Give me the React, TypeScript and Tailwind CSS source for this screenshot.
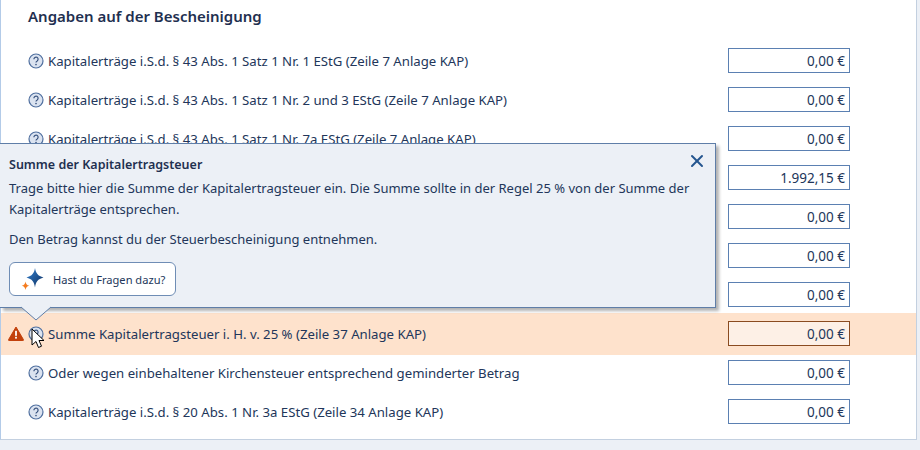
import React from 'react';
import { X } from 'lucide-react';

const font = "font-['Noto_Sans','Open_Sans',sans-serif]";

// Zeilen 4-7 liegen komplett unter dem Popover, daher ohne Beschriftung
const rows = [
  { label: 'Kapitalerträge i.S.d. § 43 Abs. 1 Satz 1 Nr. 1 EStG (Zeile 7 Anlage KAP)', value: '0,00 €' },
  { label: 'Kapitalerträge i.S.d. § 43 Abs. 1 Satz 1 Nr. 2 und 3 EStG (Zeile 7 Anlage KAP)', value: '0,00 €' },
  { label: 'Kapitalerträge i.S.d. § 43 Abs. 1 Satz 1 Nr. 7a EStG (Zeile 7 Anlage KAP)', value: '0,00 €' },
  { label: '', value: '1.992,15 €' },
  { label: '', value: '0,00 €' },
  { label: '', value: '0,00 €' },
  { label: '', value: '0,00 €' },
  { label: 'Summe Kapitalertragsteuer i. H. v. 25 % (Zeile 37 Anlage KAP)', value: '0,00 €', error: true },
  { label: 'Oder wegen einbehaltener Kirchensteuer entsprechend geminderter Betrag', value: '0,00 €' },
  { label: 'Kapitalerträge i.S.d. § 20 Abs. 1 Nr. 3a EStG (Zeile 34 Anlage KAP)', value: '0,00 €' },
];

function HelpIcon() {
  return (
    <svg width="16" height="16" viewBox="0 0 16 16" className="shrink-0">
      <circle cx="8" cy="8" r="7" fill="#dbe3f0" stroke="#4f6f9f" strokeWidth="1.2" />
      <path d="M5.900 6.200a2.100 2.100 0 1 1 3.300 1.700c-.8.5-1.200.9-1.200 1.700" fill="none" stroke="#35507c" strokeWidth="1.200" />
      <circle cx="8" cy="11.600" r="0.800" fill="#35507c" />
    </svg>
  );
}

function WarnIcon() {
  return (
    <svg width="16" height="15" viewBox="0 0 16 15" className="shrink-0">
      <path d="M8 1 15.400 13.600a.6.6 0 0 1-.5.9H1.100a.6.6 0 0 1-.5-.9Z" fill="#c2410c" stroke="#c2410c" strokeLinejoin="round" />
      <rect x="7.100" y="4.800" width="1.800" height="5" fill="#fff" />
      <rect x="7.100" y="10.800" width="1.800" height="1.800" fill="#fff" />
    </svg>
  );
}

function Sparkle() {
  return (
    <svg width="24" height="24" viewBox="0 0 24 24" className="shrink-0">
      <defs>
        <linearGradient id="sp" x1="0" y1="0" x2="1" y2="1">
          <stop offset="0" stopColor="#2f7fd0" />
          <stop offset="1" stopColor="#12305f" />
        </linearGradient>
      </defs>
      <path d="M14 1c.8 5 2.800 8 8.500 9.500-5.700 1.500-7.700 4.500-8.500 10-.8-5.500-2.800-8.500-8.500-10C11.200 9 13.200 6 14 1Z" fill="url(#sp)" />
      <path d="M4.500 14.500c.4 2.400 1.200 3.600 3.800 4.200-2.600.6-3.400 1.800-3.800 4.300-.4-2.500-1.200-3.700-3.800-4.300 2.600-.6 3.400-1.800 3.800-4.200Z" fill="#f57c1f" />
    </svg>
  );
}

function Row({ label, value, error }: { label: string; value: string; error?: boolean }) {
  return (
    <div className={`flex items-center pr-[66px] ${error ? 'mb-[-2px] mt-[-1px] h-[42px] bg-[#fee2cc] pb-[1px]' : 'h-[39px]'}`}>
      <div className="flex w-[27px] shrink-0 justify-end pr-[4px]">{error && <WarnIcon />}</div>
      <HelpIcon />
      <span className="ml-[4px] flex-1 pt-[2px] text-[13.2px] text-[#22365a]">{label}</span>
      <div
        className={`flex h-[25px] w-[122px] items-center justify-end border pr-[4px] pt-[1px] text-[13.5px] text-[#22365a] ${
          error ? 'border-[#8a4b20] bg-[#fdf0e6]' : 'border-[#5b80b2] bg-white'
        }`}
      >
        {value}
      </div>
    </div>
  );
}

export default function App() {
  return (
    <div className={`relative h-[450px] w-[920px] overflow-hidden bg-[#ecf0f6] ${font}`}>
      <div className="h-[440px] w-[917px] border-b border-l border-r border-b-[#c3d0e0] border-l-[#b3cbe8] border-r-[#c3d0e0] bg-white">
        <h2 className="h-[41px] pl-[27px] pt-[5px] text-[15px] font-semibold text-[#1f3050]">
          Angaben auf der Bescheinigung
        </h2>
        <div>
          {rows.map((r, i) => (
            <Row key={i} {...r} />
          ))}
        </div>
      </div>

      {/* Hilfe-Popover */}
      <div className="absolute left-0 top-[143px] h-[165px] w-[716px] border border-l-0 border-[#5f7ea8] bg-[#ecf0f6] pl-[9px] pt-[13px] text-[#22365a] shadow-[3px_3px_3px_rgba(0,0,0,0.3)]">
        <div className="text-[12.5px] font-semibold leading-[16px] text-[#1f3050]">Summe der Kapitalertragsteuer</div>
        <button className="absolute right-[8px] top-[7px] text-[#24558f]">
          <X size={20} strokeWidth={2.4} />
        </button>
        <p className="mt-[5px] w-[700px] text-[13px] leading-[21px]">
          Trage bitte hier die Summe der Kapitalertragsteuer ein. Die Summe sollte in der Regel 25 % von der Summe der Kapitalerträge entsprechen.
        </p>
        <p className="mt-[10px] text-[13px] leading-[19px]">Den Betrag kannst du der Steuerbescheinigung entnehmen.</p>
        <button className="mt-[13px] flex h-[34px] w-[167px] items-center gap-[8px] rounded-[6px] border border-[#6f8db5] bg-white pl-[11px] text-[11.1px] text-[#22365a]">
          <Sparkle />
          <span className="pt-[2px]">Hast du Fragen dazu?</span>
        </button>
      </div>

      {/* Pfeil des Popovers */}
      <svg width="30" height="16" viewBox="0 0 30 16" className="absolute left-[21px] top-[306px]">
        <path d="M0 1 15 14 30 1" fill="#ecf0f6" stroke="#5f7ea8" />
      </svg>

      {/* Mauszeiger */}
      <svg width="14" height="22" viewBox="0 0 14 22" className="absolute left-[31px] top-[328px]">
        <path d="M1 1v16l4-3.500 2.500 6 3-1.300-2.500-5.700h5Z" fill="#fff" stroke="#000" strokeWidth="1" strokeLinejoin="round" />
      </svg>
    </div>
  );
}
